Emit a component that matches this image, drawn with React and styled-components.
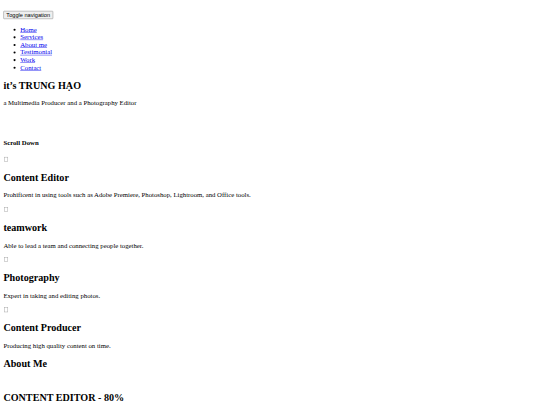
import React from "react";
import styled, { createGlobalStyle } from "styled-components";

const GlobalStyle = createGlobalStyle`
  html, body {
    margin: 0;
    padding: 0;
    background: #ffffff;
    overflow: hidden;
  }
  body {
    font-family: "Liberation Serif", "Times New Roman", serif;
    font-size: 16px;
    color: #000000;
  }
`;

const Page = styled.div`
  width: 1280px;
  padding: 8px;
  box-sizing: border-box;
  transform: scale(0.421875);
  transform-origin: 0 0;
  font-family: "Liberation Serif", "Times New Roman", serif;
  font-size: 16px;
`;

const Nav = styled.nav`
  display: block;
`;

const NavHeader = styled.div`
  padding-top: 18px;
`;

const ToggleButton = styled.button`
  font-family: "Liberation Sans", Arial, sans-serif;
  font-size: 13.333px;
  color: #000000;
  background: #efefef;
  border: 1px solid #767676;
  border-radius: 2px;
  padding: 1px 6px;
  margin: 0;
  line-height: normal;
`;

const NavList = styled.ul`
  margin: 16px 0;
  padding-left: 40px;
  list-style: disc;
`;

const NavItem = styled.li`
  line-height: normal;
`;

const NavLink = styled.a`
  color: #0000ee;
  text-decoration: underline;
`;

const Title = styled.h2`
  font-size: 24px;
  font-weight: bold;
  margin: 19.92px 0;
`;

const Text = styled.p`
  margin: 16px 0;
`;

const Spacer = styled.div`
  height: ${(p) => p.$h}px;
`;

const ScrollDown = styled.h4`
  font-size: 16px;
  font-weight: bold;
  margin: 21.28px 0;
`;

const IconLine = styled.div`
  margin: 16px 0;
  line-height: normal;
`;

const IconBox = styled.span`
  display: inline-block;
  width: 7px;
  height: 9px;
  margin-left: 2px;
  border: 1px solid #9a9a9a;
  vertical-align: baseline;
`;

const services = [
  {
    title: "Content Editor",
    text: "Prohificent in using tools such as Adobe Premiere, Photoshop, Lightroom, and Office tools.",
  },
  { title: "teamwork", text: "Able to lead a team and connecting people together." },
  { title: "Photography", text: "Expert in taking and editing photos." },
  { title: "Content Producer", text: "Producing high quality content on time." },
];

const links = ["Home", "Services", "About me", "Testimonial", "Work", "Contact"];

export default function App() {
  return (
    <>
      <GlobalStyle />
      <Page>
        <Nav>
          <NavHeader>
            <ToggleButton type="button">Toggle navigation</ToggleButton>
          </NavHeader>
          <NavList>
            {links.map((l) => (
              <NavItem key={l}>
                <NavLink href="#">{l}</NavLink>
              </NavItem>
            ))}
          </NavList>
        </Nav>
        <header>
          <Title>it’s TRUNG HẠO</Title>
          <Text>a Multimedia Producer and a Photography Editor</Text>
          <Spacer $h={39} />
          <ScrollDown>Scroll Down</ScrollDown>
        </header>
        <section>
          {services.map((s) => (
            <div key={s.title}>
              <IconLine>
                <IconBox />
              </IconLine>
              <Title>{s.title}</Title>
              <Text>{s.text}</Text>
            </div>
          ))}
        </section>
        <section>
          <Title>About Me</Title>
          <Spacer $h={15} />
          <Title>CONTENT EDITOR - 80%</Title>
        </section>
      </Page>
    </>
  );
}
